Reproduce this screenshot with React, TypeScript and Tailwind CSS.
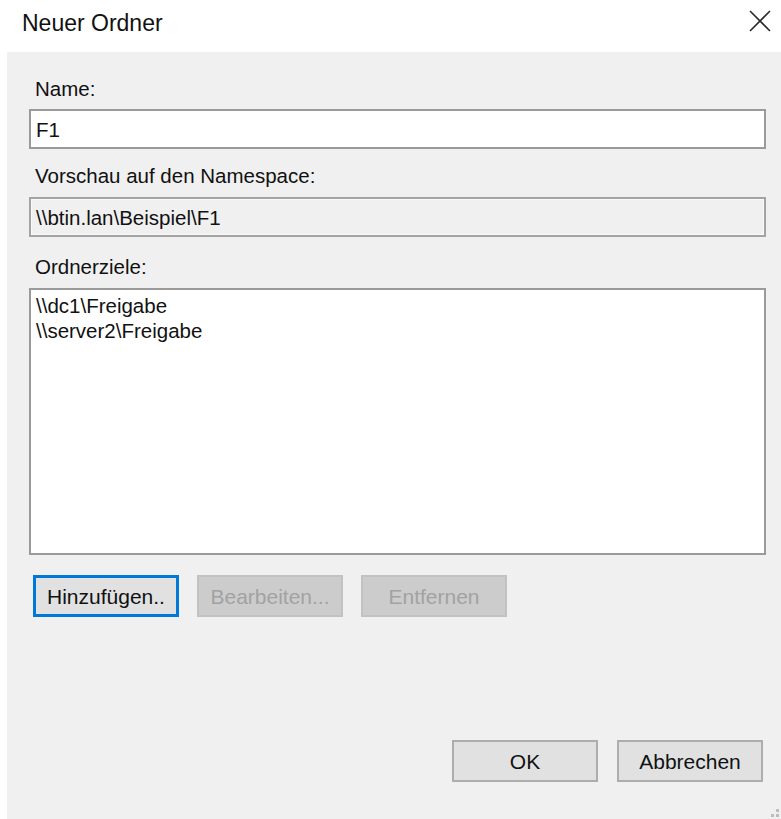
import React from 'react';

const TARGETS = ['\\\\dc1\\Freigabe', '\\\\server2\\Freigabe'];

function CloseIcon() {
  return (
    <svg width="22" height="22" viewBox="0 0 22 22" fill="none">
      <path d="M1 1 L21 21 M21 1 L1 21" stroke="#2b2b2b" strokeWidth="1.6" />
    </svg>
  );
}

function Button({
  label,
  disabled,
  focused,
}: {
  label: string;
  disabled?: boolean;
  focused?: boolean;
}) {
  return (
    <button
      disabled={disabled}
      className={
        'w-[146px] h-[42px] text-[21px] leading-none ' +
        (disabled
          ? 'border-2 bg-[#cccccc] border-[#c2c2c2] text-[#a2a2a2]'
          : focused
            ? 'border-[3px] bg-[#e1e1e1] border-[#0078d7] text-[#111]'
            : 'border-2 bg-[#e1e1e1] border-[#adadad] text-[#111]')
      }
    >
      {label}
    </button>
  );
}

export default function App() {
  return (
    <div className="w-[781px] h-[819px] bg-white flex flex-col font-['Liberation_Sans',Arial,sans-serif] text-[#111]">
      {/* title bar */}
      <div className="h-[52px] flex justify-between pl-[22px] pr-[10px]">
        <span className="mt-[10px] text-[23px] leading-[27px]">Neuer Ordner</span>
        <span className="mt-[10px]">
          <CloseIcon />
        </span>
      </div>

      {/* dialog body */}
      <div className="relative ml-[7px] flex-1 bg-[#f0f0f0] flex flex-col pl-[22px] pr-[15px] pt-[25px] pb-[37px] text-[20.5px]">
        <label className="pl-[6px] leading-6">Name:</label>
        <div className="mt-[8px] h-[40px] border-2 border-[#9a9a9a] bg-white flex items-center pl-[5px] pt-[3px]">
          F1
        </div>

        <label className="mt-[15px] pl-[6px] leading-6">Vorschau auf den Namespace:</label>
        <div className="mt-[9px] h-[40px] border-2 border-[#a3a3a3] bg-[#f0f0f0] shadow-[inset_0_0_0_1px_#fafafa] flex items-center pl-[5px] pt-[2px]">
          \\btin.lan\Beispiel\F1
        </div>

        <label className="mt-[18px] pl-[6px] leading-6">Ordnerziele:</label>
        <div className="mt-[9px] h-[267px] border-2 border-[#9a9a9a] bg-white pl-[5px] pt-[3px] leading-[25px]">
          {TARGETS.map((t) => (
            <div key={t}>{t}</div>
          ))}
        </div>

        <div className="mt-[20px] pl-[4px] flex gap-[18px]">
          <Button label="Hinzufügen.." focused />
          <Button label="Bearbeiten..." disabled />
          <Button label="Entfernen" disabled />
        </div>

        <div className="mt-auto pr-[3px] flex justify-end gap-[19px]">
          <Button label="OK" />
          <Button label="Abbrechen" />
        </div>

        {/* size grip */}
        <div className="absolute right-[2px] bottom-[2px] grid grid-cols-2 gap-[2px]">
          <span className="w-[3px] h-[3px]" />
          <span className="w-[3px] h-[3px] bg-[#bdbdbd]" />
          <span className="w-[3px] h-[3px] bg-[#bdbdbd]" />
          <span className="w-[3px] h-[3px] bg-[#bdbdbd]" />
        </div>
      </div>
    </div>
  );
}
